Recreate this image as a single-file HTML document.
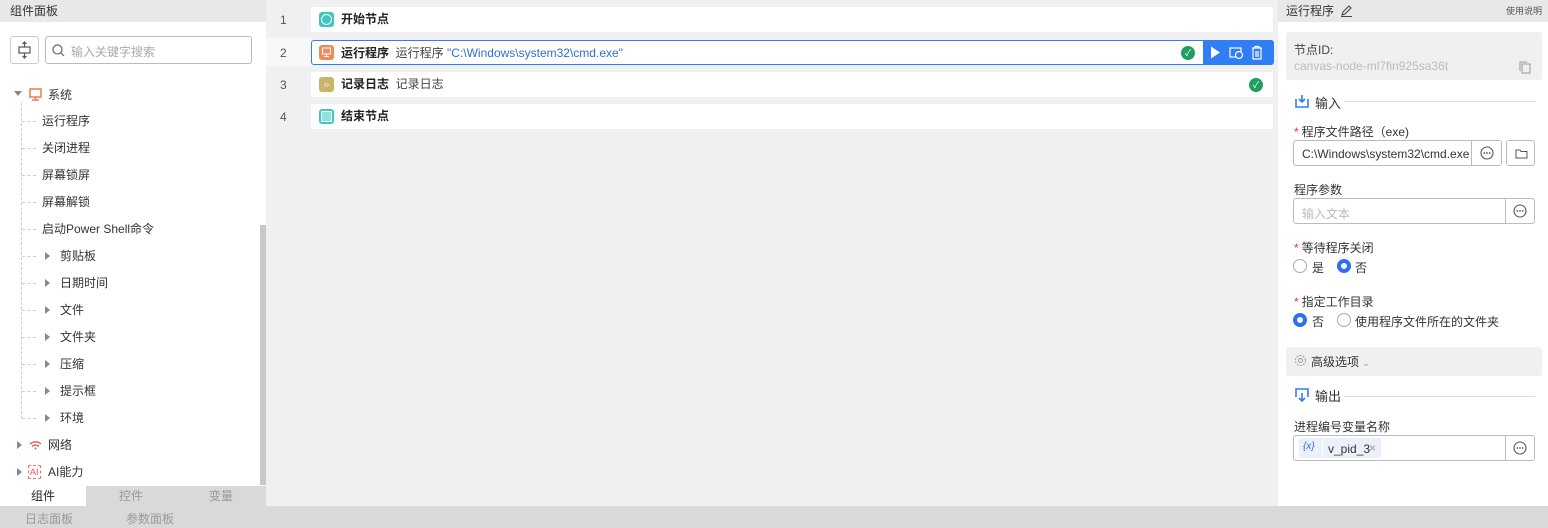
<!DOCTYPE html>
<html><head><meta charset="utf-8"><style>
*{box-sizing:border-box;margin:0;padding:0}
body{width:1548px;height:528px;overflow:hidden;background:#f0f0f2;font-family:"Liberation Sans","Noto Sans CJK SC",sans-serif;font-size:12px;color:#333;position:relative}
.abs{position:absolute}
.left{left:0;top:0;width:266px;height:506px;background:#fff}
.hdr{height:22px;background:#e8e8e8;line-height:22px;padding-left:10px;font-size:12px;color:#333}
.tree div{position:absolute;font-size:12px;color:#333;line-height:14px}
.dash{position:absolute;border-top:1px dashed #ccc;width:14px}
.tri{position:absolute;width:0;height:0;border-top:4px solid transparent;border-bottom:4px solid transparent;border-left:5px solid #888}
.card{position:absolute;left:311px;width:962px;height:25px;background:#fff;border-radius:3px}
.num{position:absolute;left:280px;font-size:12px;color:#555}
.ic{position:absolute;left:8px;top:5px;width:15px;height:15px;border-radius:3px}
.ct{position:absolute;left:30px;top:5px;font-size:12px;font-weight:bold;color:#222;line-height:15px}
.ok{position:absolute;width:14px;height:14px;border-radius:50%;background:#1fa060;color:#fff;font-size:9px;text-align:center;line-height:14px}
.right{left:1278px;top:0;width:270px;height:506px;background:#fff}
.lbl{position:absolute;left:1294px;font-size:12px;color:#333}
.lbl b{color:#e33;font-weight:normal;margin-right:3px}
.inp{position:absolute;border:1px solid #bbb;border-radius:3px;background:#fff}
.dots{position:absolute;width:14px;height:14px}
.radio{position:absolute;width:14px;height:14px;border-radius:50%;border:1px solid #aaa;background:#fff}
.radio.on{border:4px solid #2f6ef5}
</style></head><body>
<svg width="0" height="0" style="position:absolute"><symbol id="dt" viewBox="0 0 14 14"><circle cx="7" cy="7" r="6" fill="none" stroke="#555" stroke-width="1.1"/><circle cx="4.3" cy="7" r="0.9" fill="#555"/><circle cx="7" cy="7" r="0.9" fill="#555"/><circle cx="9.7" cy="7" r="0.9" fill="#555"/></symbol></svg>

<div class="abs left">
<div class="hdr">组件面板</div>
<div class="abs" style="left:10px;top:36px;width:29px;height:28px;border:1px solid #ccc;border-radius:3px"><svg width="27" height="26" viewBox="0 0 27 26"><rect x="8" y="10" width="11" height="6" fill="none" stroke="#555" stroke-width="1.2"/><path d="M13.5 5v5M13.5 16v5M11.5 7l2-2 2 2M11.5 19l2 2 2-2" stroke="#555" fill="none" stroke-width="1.2"/></svg></div>
<div class="abs" style="left:45px;top:36px;width:207px;height:28px;border:1px solid #bbb;border-radius:3px">
<svg class="abs" style="left:6px;top:7px" width="13" height="13"><circle cx="5.5" cy="5.5" r="4.5" fill="none" stroke="#666" stroke-width="1.2"/><path d="M9 9l3 3" stroke="#666" stroke-width="1.2"/></svg>
<span class="abs" style="left:25px;top:6px;color:#aaa">输入关键字搜索</span></div>
<div class="tree">
<div class="tri" style="left:14px;top:91px;border-left:4px solid transparent;border-right:4px solid transparent;border-top:5px solid #888;border-bottom:0"></div>
<svg class="abs" style="left:29px;top:88px" width="13" height="13"><rect x="1" y="1" width="11" height="8" fill="none" stroke="#f07a4a" stroke-width="1.5"/><path d="M6.5 9v3M3 12h7" stroke="#f07a4a" stroke-width="1.5"/></svg>
<div style="left:48px;top:88px">系统</div>
<div class="abs" style="left:21px;top:103px;height:316px;border-left:1px dashed #ccc;position:absolute"></div>
<span class="dash" style="left:22px;top:121px"></span><div style="left:42px;top:114px">运行程序</div>
<span class="dash" style="left:22px;top:148px"></span><div style="left:42px;top:141px">关闭进程</div>
<span class="dash" style="left:22px;top:175px"></span><div style="left:42px;top:168px">屏幕锁屏</div>
<span class="dash" style="left:22px;top:202px"></span><div style="left:42px;top:195px">屏幕解锁</div>
<span class="dash" style="left:22px;top:229px"></span><div style="left:42px;top:222px">启动Power Shell命令</div>
<span class="dash" style="left:22px;top:256px"></span><span class="tri" style="left:45px;top:252px"></span><div style="left:60px;top:249px">剪贴板</div>
<span class="dash" style="left:22px;top:283px"></span><span class="tri" style="left:45px;top:279px"></span><div style="left:60px;top:276px">日期时间</div>
<span class="dash" style="left:22px;top:310px"></span><span class="tri" style="left:45px;top:306px"></span><div style="left:60px;top:303px">文件</div>
<span class="dash" style="left:22px;top:337px"></span><span class="tri" style="left:45px;top:333px"></span><div style="left:60px;top:330px">文件夹</div>
<span class="dash" style="left:22px;top:364px"></span><span class="tri" style="left:45px;top:360px"></span><div style="left:60px;top:357px">压缩</div>
<span class="dash" style="left:22px;top:391px"></span><span class="tri" style="left:45px;top:387px"></span><div style="left:60px;top:384px">提示框</div>
<span class="dash" style="left:22px;top:418px"></span><span class="tri" style="left:45px;top:414px"></span><div style="left:60px;top:411px">环境</div>
<span class="tri" style="left:17px;top:441px"></span>
<svg class="abs" style="left:29px;top:440px" width="13" height="10"><path d="M1 4a8 8 0 0 1 11 0M3 6.5a5 5 0 0 1 7 0" fill="none" stroke="#e55" stroke-width="1.3"/><circle cx="6.5" cy="8.5" r="1" fill="#e55"/></svg>
<div style="left:48px;top:438px">网络</div>
<span class="tri" style="left:17px;top:468px"></span>
<div style="left:28px;top:465px;color:#e55;font-size:9px;border:1px dashed #e77;padding:0 1px;line-height:12px">AI</div>
<div style="left:48px;top:465px">AI能力</div>
</div>
<div class="abs" style="left:260px;top:225px;width:6px;height:260px;background:#c8c8c8"></div>
<div class="abs" style="left:0;top:486px;width:86px;height:20px;background:#fff;text-align:center;line-height:20px;color:#222">组件</div>
<div class="abs" style="left:86px;top:486px;width:90px;height:20px;background:#d9d9d9;text-align:center;line-height:20px;color:#999">控件</div>
<div class="abs" style="left:176px;top:486px;width:90px;height:20px;background:#d9d9d9;text-align:center;line-height:20px;color:#999">变量</div>
</div>
<div class="abs" style="left:0;top:506px;width:1548px;height:22px;background:#d9d9d9"></div>
<div class="abs" style="left:25px;top:510px;color:#999">日志面板</div>
<div class="abs" style="left:126px;top:510px;color:#999">参数面板</div>

<div class="abs" style="left:266px;top:37px;width:45px;height:30px;background:#f7f7f7"></div>
<div class="num" style="top:13px">1</div>
<div class="num" style="top:46px">2</div>
<div class="num" style="top:78px">3</div>
<div class="num" style="top:110px">4</div>

<div class="card" style="top:7px"><div class="ic" style="background:#3cc8c0"><div style="margin:2px;width:11px;height:11px;border:1.5px solid #fff;border-radius:50%"></div></div><div class="ct">开始节点</div></div>
<div class="card" style="top:40px;border:1px solid #2f7ef5;height:25px"><div class="ic" style="background:#f08a5d;top:4px;left:7px"><svg width="15" height="15"><rect x="3.5" y="3" width="8" height="6" fill="none" stroke="#fff"/><path d="M7.5 9v2.5M5 11.5h5" stroke="#fff"/></svg></div><div class="ct" style="top:5px;left:29px">运行程序 <span style="font-weight:normal;color:#444">&nbsp;运行程序 </span><span style="font-weight:normal;color:#2f6ed5">"C:\Windows\system32\cmd.exe"</span></div>
<div class="ok" style="left:869px;top:5px">✓</div>
<div class="abs" style="left:891px;top:-1px;width:71px;height:25px;background:#2f7ef5;border-radius:0 3px 3px 0">
<svg class="abs" style="left:6px;top:5px" width="60" height="15"><path d="M2 1.5l9 6-9 6z" fill="#fff"/><rect x="21" y="3" width="11" height="9" fill="none" stroke="#fff" stroke-width="1.2"/><circle cx="30" cy="10" r="3.5" fill="#2f7ef5" stroke="#fff" stroke-width="1.2"/><path d="M43 3h10M46 3V1.5h4V3M44 3v11h8V3M47 6v6M49 6v6" stroke="#fff" fill="none" stroke-width="1.2"/></svg></div>
</div>
<div class="card" style="top:72px"><div class="ic" style="background:#c9b56a;color:#fff;font-size:8px;text-align:center;line-height:15px">‹›</div><div class="ct">记录日志 <span style="font-weight:normal;color:#444">&nbsp;记录日志</span></div><div class="ok" style="left:938px;top:6px">✓</div></div>
<div class="card" style="top:104px"><div class="ic" style="background:#3cc8c0"><div style="margin:2px;width:11px;height:11px;background:#8ee3dc;border:1px solid #fff"></div></div><div class="ct">结束节点</div></div>

<div class="abs right">
<div class="hdr" style="padding-left:8px">运行程序 <svg width="13" height="13" style="vertical-align:-2px;margin-left:3px"><path d="M2 11l1-3 6-6 2 2-6 6z M1 12.5h11" fill="none" stroke="#444" stroke-width="1.1"/></svg><span style="position:absolute;right:6px;font-size:9px;color:#555">使用说明</span></div>
</div>
<div class="abs" style="left:1286px;top:32px;width:256px;height:48px;background:#f0f0f0;border-radius:3px"></div>
<div class="abs" style="left:1294px;top:41px;color:#444">节点ID:</div>
<div class="abs" style="left:1294px;top:59px;color:#bbb">canvas-node-ml7fin925sa36t</div>
<svg class="abs" style="left:1519px;top:61px" width="12" height="13"><rect x="3" y="3" width="8" height="9" fill="none" stroke="#999"/><path d="M1 10V1h7" fill="none" stroke="#999"/></svg>

<svg class="abs" style="left:1295px;top:94px" width="14" height="14"><path d="M1 5v8h12V5" fill="none" stroke="#2f7ef5" stroke-width="1.6"/><path d="M7 1v7M4 5l3 3 3-3" fill="none" stroke="#2f7ef5" stroke-width="1.6"/></svg>
<div class="abs" style="left:1315px;top:93px;font-size:13px;color:#333">输入</div>
<div class="abs" style="left:1344px;top:101px;width:191px;border-top:1px solid #ddd"></div>

<div class="lbl" style="top:123px"><b>*</b>程序文件路径（exe)</div>
<div class="inp" style="left:1293px;top:140px;width:209px;height:26px"><span class="abs" style="left:8px;top:6px;color:#333">C:\Windows\system32\cmd.exe</span><div class="abs" style="left:177px;top:0;height:24px;border-left:1px solid #bbb"></div><svg class="dots" style="left:186px;top:5px"><use href="#dt"/></svg></div>
<div class="inp" style="left:1506px;top:140px;width:29px;height:26px"><svg class="abs" style="left:8px;top:8px" width="13" height="10"><path d="M1 1h4l1 1.5h6V9H1z" fill="none" stroke="#555"/></svg></div>

<div class="lbl" style="top:181px">程序参数</div>
<div class="inp" style="left:1293px;top:198px;width:242px;height:26px"><span class="abs" style="left:8px;top:6px;color:#bbb">输入文本</span><div class="abs" style="left:211px;top:0;height:24px;border-left:1px solid #bbb"></div><svg class="dots" style="left:219px;top:5px"><use href="#dt"/></svg></div>

<div class="lbl" style="top:239px"><b>*</b>等待程序关闭</div>
<div class="radio" style="left:1293px;top:259px"></div><div class="abs" style="left:1312px;top:259px">是</div>
<div class="radio on" style="left:1337px;top:259px"></div><div class="abs" style="left:1355px;top:259px">否</div>

<div class="lbl" style="top:293px"><b>*</b>指定工作目录</div>
<div class="radio on" style="left:1293px;top:313px"></div><div class="abs" style="left:1312px;top:313px">否</div>
<div class="radio" style="left:1337px;top:313px"></div><div class="abs" style="left:1355px;top:313px">使用程序文件所在的文件夹</div>

<div class="abs" style="left:1286px;top:347px;width:256px;height:29px;background:#f0f0f0;border-radius:3px"></div>
<svg class="abs" style="left:1294px;top:354px" width="13" height="13"><circle cx="6.5" cy="6.5" r="2" fill="none" stroke="#999"/><circle cx="6.5" cy="6.5" r="5" fill="none" stroke="#999" stroke-dasharray="2 1.2"/></svg>
<div class="abs" style="left:1311px;top:353px;color:#333">高级选项 <span style="color:#999;font-size:9px">⌄</span></div>

<svg class="abs" style="left:1295px;top:388px" width="14" height="14"><path d="M1 9V1h12v8" fill="none" stroke="#2f7ef5" stroke-width="1.6"/><path d="M7 5v8M4 10l3 3 3-3" fill="none" stroke="#2f7ef5" stroke-width="1.6"/></svg>
<div class="abs" style="left:1315px;top:386px;font-size:13px;color:#333">输出</div>
<div class="abs" style="left:1344px;top:396px;width:191px;border-top:1px solid #ddd"></div>

<div class="lbl" style="top:418px">进程编号变量名称</div>
<div class="inp" style="left:1293px;top:435px;width:242px;height:26px">
<div class="abs" style="left:5px;top:2px;width:82px;height:20px;background:#eaf1fb;border-radius:2px"></div>
<span class="abs" style="left:9px;top:5px;color:#2f6ed5;font-size:10px;font-style:italic">{x}</span>
<div class="abs" style="left:28px;top:2px;height:20px;border-left:1px solid #fff"></div>
<span class="abs" style="left:34px;top:6px;color:#333">v_pid_3</span><span class="abs" style="left:75px;top:5px;color:#999">×</span>
<div class="abs" style="left:211px;top:0;height:24px;border-left:1px solid #bbb"></div><svg class="dots" style="left:219px;top:5px"><use href="#dt"/></svg></div>
</body></html>
